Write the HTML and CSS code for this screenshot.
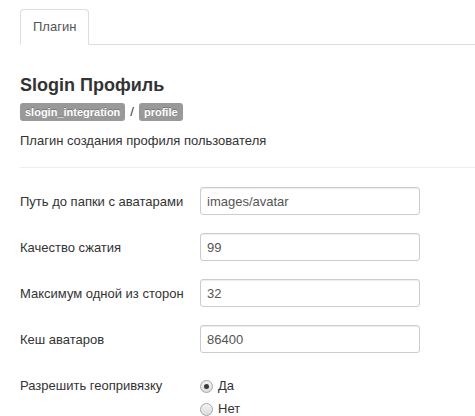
FILE: index.html
```html
<!DOCTYPE html>
<html lang="ru">
<head>
<meta charset="utf-8">
<title>Slogin Профиль</title>
<link rel="stylesheet" href="styles.css">
</head>
<body>
<div class="page">
  <ul class="tabs">
    <li class="tab active">Плагин</li>
  </ul>
  <h2 class="title">Slogin Профиль</h2>
  <div class="badges">
    <span class="badge">slogin_integration</span>
    <span class="sep">/</span>
    <span class="badge">profile</span>
  </div>
  <p class="desc">Плагин создания профиля пользователя</p>
  <hr class="divider">
  <form class="form">
    <div class="row">
      <label class="label">Путь до папки с аватарами</label>
      <div class="control"><input class="input" type="text" value="images/avatar"></div>
    </div>
    <div class="row">
      <label class="label">Качество сжатия</label>
      <div class="control"><input class="input" type="text" value="99"></div>
    </div>
    <div class="row">
      <label class="label">Максимум одной из сторон</label>
      <div class="control"><input class="input" type="text" value="32"></div>
    </div>
    <div class="row">
      <label class="label">Кеш аватаров</label>
      <div class="control"><input class="input" type="text" value="86400"></div>
    </div>
    <div class="row">
      <label class="label">Разрешить геопривязку</label>
      <div class="control radios">
        <label class="radio"><input type="radio" name="geo" checked><span>Да</span></label>
        <label class="radio"><input type="radio" name="geo"><span>Нет</span></label>
      </div>
    </div>
  </form>
</div>
</body>
</html>
```
FILE: styles.css
```css
html, body {
  margin: 0;
  padding: 0;
  background: #fff;
}
body {
  font-family: "Liberation Sans", Arial, sans-serif;
  font-size: 13px;
  line-height: 18px;
  color: #333;
}
.page {
  padding: 9px 0 0 20px;
  overflow: hidden;
}
.tabs {
  list-style: none;
  margin: 0;
  padding: 0;
  display: flex;
  border-bottom: 1px solid #ddd;
}
.tab {
  padding: 8px 12px;
  line-height: 18px;
  border: 1px solid #ddd;
  border-bottom-color: #fff;
  border-radius: 4px 4px 0 0;
  margin-bottom: -1px;
  background: #fff;
  color: #555;
}
.title {
  margin: 30px 0 0;
  font-size: 18px;
  line-height: 20px;
  font-weight: bold;
  color: #333;
}
.badges {
  margin-top: 8px;
  line-height: 18px;
  display: flex;
  align-items: center;
  gap: 5px;
}
.badge {
  display: inline-block;
  padding: 2px 5px;
  font-size: 11px;
  line-height: 14px;
  font-weight: bold;
  color: #fff;
  background: #999;
  border-radius: 3px;
  text-shadow: 0 -1px 0 rgba(0, 0, 0, 0.25);
}
.sep {
  color: #333;
}
.desc {
  margin: 11px 0 0;
}
.divider {
  margin: 17px 0 0;
  border: 0;
  border-top: 1px solid #eee;
  border-bottom: 1px solid #fff;
  height: 0;
}
.form {
  margin-top: 18px;
}
.row {
  display: flex;
  margin-bottom: 18px;
}
.label {
  width: 180px;
  flex: none;
  padding-top: 6px;
}
.input {
  box-sizing: border-box;
  width: 220px;
  height: 28px;
  padding: 4px 6px;
  font-family: "Liberation Sans", Arial, sans-serif;
  font-size: 13px;
  line-height: 18px;
  color: #555;
  border: 1px solid #ccc;
  border-radius: 3px;
  background: #fff;
  box-shadow: inset 0 1px 1px rgba(0, 0, 0, 0.075);
  margin: 0;
}
.radios {
  display: flex;
  flex-direction: column;
  gap: 5px;
  padding-top: 6px;
}
.radio {
  display: flex;
  align-items: center;
  line-height: 18px;
}
.radio input {
  -webkit-appearance: none;
  appearance: none;
  box-sizing: border-box;
  width: 13px;
  height: 13px;
  margin: 0 5px 0 0;
  border: 1px solid #a6a6a6;
  border-radius: 50%;
  background: linear-gradient(#f4f4f4, #dcdcdc);
  position: relative;
}
.radio input:checked::after {
  content: "";
  position: absolute;
  left: 3px;
  top: 3px;
  width: 5px;
  height: 5px;
  border-radius: 50%;
  background: #3a3a3a;
}
```
